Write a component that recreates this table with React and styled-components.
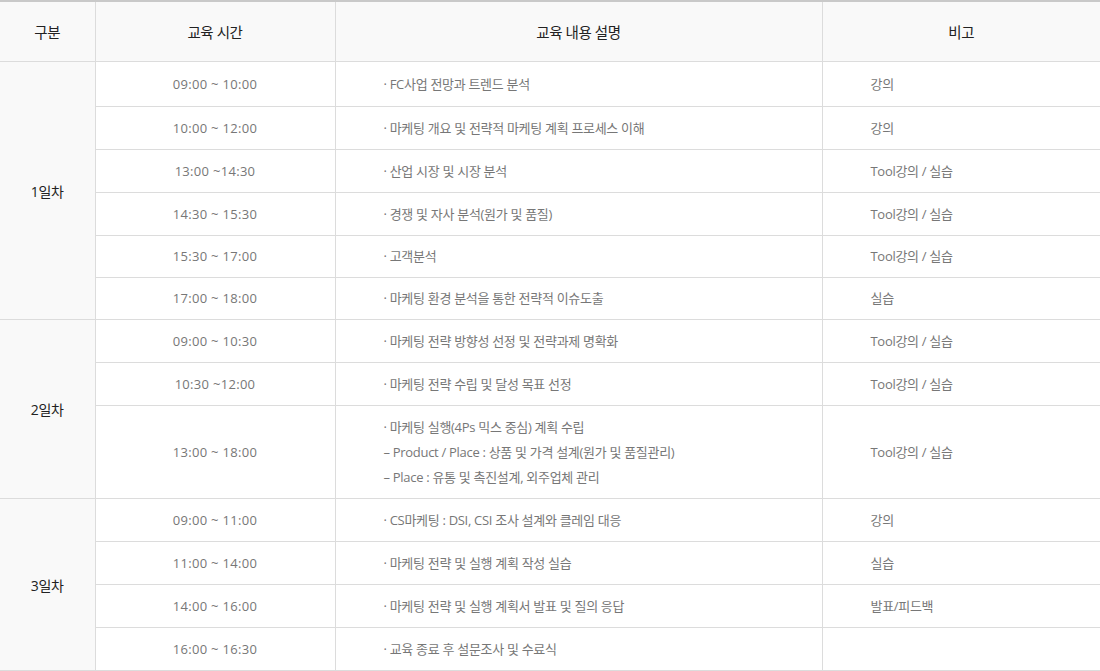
import React from "react";
import styled, { createGlobalStyle } from "styled-components";

const GlobalStyle = createGlobalStyle`
  html, body {
    margin: 0;
    padding: 0;
    background: #fff;
  }
  body {
    font-family: "Open Sans", "Noto Sans CJK KR", sans-serif;
  }
`;

const Table = styled.table`
  width: 1100px;
  border-collapse: collapse;
  table-layout: fixed;
  border-top: 2px solid #c9c9c9;
  font-size: 13px;
  letter-spacing: -0.3px;
`;

const HeadCell = styled.th`
  height: 59px;
  padding: 0;
  background: #f9f9f9;
  color: #222;
  font-weight: 400;
  font-size: 14.5px;
  letter-spacing: -0.4px;
  text-align: center;
  border-bottom: 1px solid #dcdcdc;
  border-left: 1px solid #dcdcdc;

  &:first-child {
    border-left: none;
  }
`;

const DayCell = styled.td`
  padding: 0;
  background: #f9f9f9;
  color: #222;
  font-size: 14px;
  text-align: center;
  border-bottom: 1px solid #dcdcdc;
`;

const Cell = styled.td`
  height: ${(p) => p.$h || 42}px;
  padding: ${(p) => (p.$align === "left" ? "0 0 0 48px" : "0")};
  color: #777;
  text-align: ${(p) => p.$align || "center"};
  letter-spacing: ${(p) => (p.$align === "left" ? "-0.3px" : "0.3px")};
  border-bottom: 1px solid #dcdcdc;
  border-left: 1px solid #dcdcdc;
  line-height: 25px;
`;

const Line = styled.div`
  white-space: nowrap;
`;

const schedule = [
  {
    day: "1일차",
    rows: [
      { time: "09:00 ~ 10:00", desc: ["· FC사업 전망과 트렌드 분석"], note: "강의", h: 44 },
      { time: "10:00 ~ 12:00", desc: ["· 마케팅 개요 및 전략적 마케팅 계획 프로세스 이해"], note: "강의" },
      { time: "13:00 ~14:30", desc: ["· 산업 시장 및 시장 분석"], note: "Tool강의 / 실습" },
      { time: "14:30 ~ 15:30", desc: ["· 경쟁 및 자사 분석(원가 및 품질)"], note: "Tool강의 / 실습" },
      { time: "15:30 ~ 17:00", desc: ["· 고객분석"], note: "Tool강의 / 실습", h: 41 },
      { time: "17:00  ~ 18:00", desc: ["· 마케팅 환경 분석을 통한 전략적 이슈도출"], note: "실습", h: 41 },
    ],
  },
  {
    day: "2일차",
    rows: [
      { time: "09:00 ~ 10:30", desc: ["· 마케팅 전략 방향성 선정 및 전략과제 명확화"], note: "Tool강의 / 실습" },
      { time: "10:30 ~12:00", desc: ["· 마케팅 전략 수립 및 달성 목표 선정"], note: "Tool강의 / 실습" },
      {
        time: "13:00 ~ 18:00",
        desc: [
          "· 마케팅 실행(4Ps 믹스 중심) 계획 수립",
          "– Product / Place : 상품 및 가격 설계(원가 및 품질관리)",
          "– Place : 유통 및 촉진설계, 외주업체 관리",
        ],
        note: "Tool강의 / 실습",
        h: 92,
      },
    ],
  },
  {
    day: "3일차",
    rows: [
      { time: "09:00 ~ 11:00", desc: ["· CS마케팅 : DSI, CSI 조사 설계와 클레임 대응"], note: "강의" },
      { time: "11:00 ~ 14:00", desc: ["· 마케팅 전략 및 실행 계획 작성 실습"], note: "실습" },
      { time: "14:00 ~ 16:00", desc: ["· 마케팅 전략 및 실행 계획서 발표 및 질의 응답"], note: "발표/피드백" },
      { time: "16:00 ~ 16:30", desc: ["· 교육 종료 후 설문조사 및 수료식"], note: "" },
    ],
  },
];

export default function App() {
  return (
    <>
      <GlobalStyle />
      <Table>
        <colgroup>
          <col style={{ width: 95 }} />
          <col style={{ width: 240 }} />
          <col style={{ width: 487 }} />
          <col />
        </colgroup>
        <thead>
          <tr>
            <HeadCell>구분</HeadCell>
            <HeadCell>교육 시간</HeadCell>
            <HeadCell>교육 내용 설명</HeadCell>
            <HeadCell>비고</HeadCell>
          </tr>
        </thead>
        <tbody>
          {schedule.map((group) =>
            group.rows.map((row, i) => (
              <tr key={group.day + row.time}>
                {i === 0 && <DayCell rowSpan={group.rows.length}>{group.day}</DayCell>}
                <Cell $h={row.h}>{row.time}</Cell>
                <Cell $h={row.h} $align="left">
                  {row.desc.map((d) => (
                    <Line key={d}>{d}</Line>
                  ))}
                </Cell>
                <Cell $h={row.h} $align="left">
                  {row.note}
                </Cell>
              </tr>
            ))
          )}
        </tbody>
      </Table>
    </>
  );
}
